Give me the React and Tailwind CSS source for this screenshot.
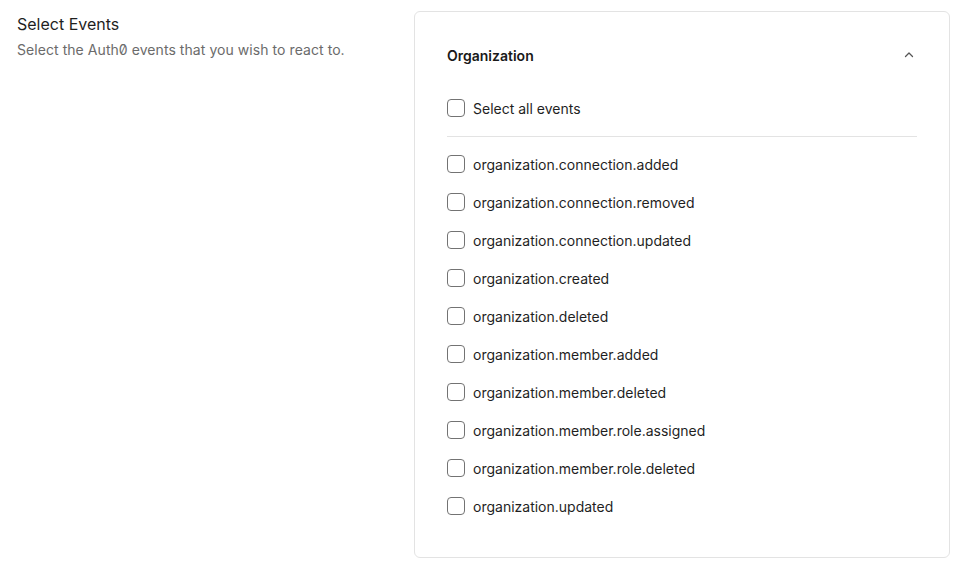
import { useState } from 'react';

const events = [
  'organization.connection.added',
  'organization.connection.removed',
  'organization.connection.updated',
  'organization.created',
  'organization.deleted',
  'organization.member.added',
  'organization.member.deleted',
  'organization.member.role.assigned',
  'organization.member.role.deleted',
  'organization.updated',
];

const Box = ({ checked, onChange, label }) => (
  <label className="flex items-center gap-[8px] h-[20px] cursor-pointer">
    <input type="checkbox" className="sr-only" checked={checked} onChange={onChange} />
    <span
      className={`w-[18px] h-[18px] rounded-[4px] border-[1.5px] shrink-0 flex items-center justify-center ${
        checked ? 'bg-[#191919] border-[#191919]' : 'border-[#737373] bg-white'
      }`}
    >
      {checked && (
        <svg width="12" height="12" viewBox="0 0 12 12" fill="none">
          <path d="M2.5 6.2l2.3 2.3 4.7-5" stroke="white" strokeWidth="1.6" strokeLinecap="round" strokeLinejoin="round" />
        </svg>
      )}
    </span>
    <span className="text-[14px] text-[#1f1f1f]">{label}</span>
  </label>
);

const App = () => {
  const [selected, setSelected] = useState([]);
  const [open, setOpen] = useState(true);

  const allSelected = selected.length === events.length;

  const toggle = (name) => {
    setSelected((s) => (s.includes(name) ? s.filter((x) => x !== name) : [...s, name]));
  };

  return (
    <div className="min-h-screen bg-white font-['Inter',sans-serif] flex pl-[17px] pr-[15px] pt-[11px]">
      <div className="w-[397px] shrink-0 pt-[3px]">
        <h2 className="text-[16px] leading-[20px] text-[#1f1f1f]">Select Events</h2>
        <p className="mt-[6px] text-[14px] leading-[20px] tracking-[0.06px] text-[#6b6b6b] [font-feature-settings:'zero']">
          Select the Auth0 events that you wish to react to.
        </p>
      </div>

      <div className="flex-1 h-[547px] border border-[#e3e3e3] rounded-[6px] px-[32px] pt-[33px]">
        <button
          type="button"
          onClick={() => setOpen(!open)}
          className="w-full flex items-center justify-between h-[20px]"
        >
          <span className="text-[14px] font-semibold text-[#191919]">Organization</span>
          <svg
            width="12"
            height="12"
            viewBox="0 0 12 12"
            fill="none"
            className={`mr-[2px] ${open ? '' : 'rotate-180'}`}
          >
            <path d="M2.5 7.5L6 4l3.5 3.5" stroke="#555" strokeWidth="1.3" strokeLinecap="round" strokeLinejoin="round" />
          </svg>
        </button>

        {open && (
          <div className="mt-[33px]">
            <Box
              checked={allSelected}
              onChange={() => setSelected(allSelected ? [] : [...events])}
              label="Select all events"
            />
            <div className="mt-[18px] border-t border-[#e3e3e3]" />
            <div className="mt-[17px] flex flex-col gap-[18px]">
              {events.map((e) => (
                <Box key={e} checked={selected.includes(e)} onChange={() => toggle(e)} label={e} />
              ))}
            </div>
          </div>
        )}
      </div>
    </div>
  );
};

export default App;
